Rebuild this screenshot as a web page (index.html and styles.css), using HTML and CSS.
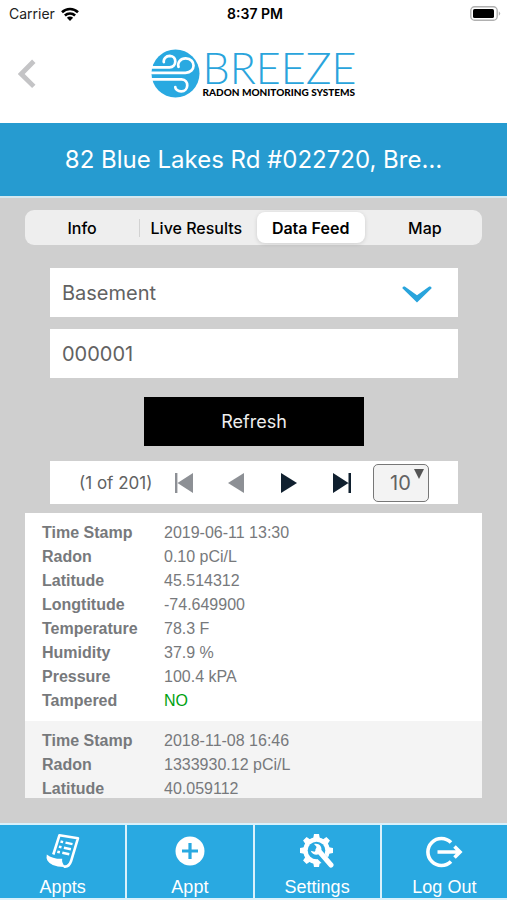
FILE: index.html
```html
<!DOCTYPE html>
<html lang="en">
<head>
<meta charset="utf-8">
<meta name="viewport" content="width=device-width, initial-scale=1">
<title>Breeze Radon Monitoring Systems</title>
<link rel="stylesheet" href="styles.css">
</head>
<body>
<div class="app">
  <div class="status">
    <div class="carrier">Carrier
      <svg width="18" height="14" viewBox="0 0 18 14" aria-hidden="true"><g fill="none" stroke="#000" stroke-width="2.6"><path d="M1 5.2a11.6 11.6 0 0 1 16 0"/><path d="M3.9 8.5a7.4 7.4 0 0 1 10.2 0"/></g><path d="M9 14 5.9 10.8a4.4 4.4 0 0 1 6.2 0z"/></svg>
    </div>
    <div class="clock">8:37 PM</div>
    <div class="battery">
      <svg width="31" height="15" viewBox="0 0 31 15" aria-hidden="true"><rect x=".8" y=".8" width="26.4" height="13.4" rx="3.8" fill="#fff" stroke="#b0b0b0" stroke-width="1.4"/><rect x="3" y="3" width="21" height="9" rx="1.6"/><path d="M28.8 5.2q2.8 2.3 0 4.6z" fill="#b0b0b0"/></svg>
    </div>
  </div>
  <header class="header">
    <button class="back" type="button" aria-label="Back">
      <svg width="18" height="30" viewBox="0 0 18 30" aria-hidden="true"><path d="M15.8 2.2 3.2 15l12.6 12.4" fill="none" stroke="#c4c4c6" stroke-width="4.8"/></svg>
    </button>
    <div class="logo">
      <svg width="49" height="49" viewBox="0 0 49 49" aria-hidden="true"><circle cx="24.5" cy="24.5" r="24" fill="#29a9e1"/><g fill="none" stroke="#fff" stroke-width="2.7" stroke-linecap="round"><path d="M1 18.3h17.500c7.500 0 7.800-11.300.3-11.500-4 0-6.500 3.200-6 6.300"/><path d="M1 23.800h33.500c10.500 0 10.800-14.200.2-14.400-5.400 0-8.600 4.200-7.200 8.400"/><path d="M1 30.300h29.500c8 .4 7.400 12.300-.4 12.100-3.400-.1-5.800-2.400-5.800-4.200"/></g></svg>
      <div class="wordmark"><span class="brand">BREEZE</span><span class="tagline">RADON MONITORING SYSTEMS</span></div>
    </div>
  </header>
  <h1 class="title">82 Blue Lakes Rd #022720, Bre…</h1>
  <main class="content">
    <div class="tabs" role="tablist">
      <button class="tab" type="button" role="tab">Info</button>
      <button class="tab tab-divided" type="button" role="tab">Live Results</button>
      <button class="tab tab-active" type="button" role="tab" aria-selected="true">Data Feed</button>
      <button class="tab" type="button" role="tab">Map</button>
    </div>
    <form class="form">
      <div class="select-wrap">
        <select class="field" aria-label="Location"><option>Basement</option></select>
        <svg class="chevron" width="30" height="17" viewBox="0 0 30 17" aria-hidden="true"><path d="M.4 2.200Q.4 0 2.800.6L15 9.300 27.200.6q2.400-.6 2.400 1.600L15 16.600z" fill="#29a4dc"/></svg>
      </div>
      <input class="field" type="text" value="000001" aria-label="Device number">
      <button class="refresh" type="button">Refresh</button>
      <div class="pager">
        <span class="count">(1 of 201)</span>
        <div class="pages">
          <button class="page" type="button" aria-label="First page"><svg width="20" height="20" viewBox="0 0 20 20" aria-hidden="true"><path d="M1 0h2.400v20H1zM19 0v20L3.500 10z" fill="#8d9095"/></svg></button>
          <button class="page" type="button" aria-label="Previous page"><svg width="20" height="20" viewBox="0 0 20 20" aria-hidden="true"><path d="M18 0v20L2 10z" fill="#8d9095"/></svg></button>
          <button class="page" type="button" aria-label="Next page"><svg width="20" height="20" viewBox="0 0 20 20" aria-hidden="true"><path d="M2 0v20l16-10z" fill="#10202f"/></svg></button>
          <button class="page" type="button" aria-label="Last page"><svg width="20" height="20" viewBox="0 0 20 20" aria-hidden="true"><path d="M1 0v20l15.500-10zM16.500 0H19v20h-2.500z" fill="#10202f"/></svg></button>
        </div>
        <div class="size-wrap">
          <select class="size" aria-label="Rows per page"><option>10</option></select>
          <svg class="size-arrow" width="10" height="10" viewBox="0 0 10 10" aria-hidden="true"><path d="M0 0h10L5 10z" fill="#555"/></svg>
        </div>
      </div>
    </form>
    <div class="feed">
      <table class="record">
        <tr><th scope="row">Time Stamp</th><td>2019-06-11 13:30</td></tr>
        <tr><th scope="row">Radon</th><td>0.10 pCi/L</td></tr>
        <tr><th scope="row">Latitude</th><td>45.514312</td></tr>
        <tr><th scope="row">Longtitude</th><td>-74.649900</td></tr>
        <tr><th scope="row">Temperature</th><td>78.3 F</td></tr>
        <tr><th scope="row">Humidity</th><td>37.9 %</td></tr>
        <tr><th scope="row">Pressure</th><td>100.4 kPA</td></tr>
        <tr><th scope="row">Tampered</th><td class="ok">NO</td></tr>
      </table>
      <table class="record record-alt">
        <tr><th scope="row">Time Stamp</th><td>2018-11-08 16:46</td></tr>
        <tr><th scope="row">Radon</th><td>1333930.12 pCi/L</td></tr>
        <tr><th scope="row">Latitude</th><td>40.059112</td></tr>
      </table>
    </div>
  </main>
  <nav class="nav">
    <a class="nav-item" href="#appts">
      <svg width="34" height="36" viewBox="0 0 34 36" aria-hidden="true"><path d="M7.300 21.500 13.400 2.300 32 5.200 25 28.300q-2.200 6.200-7.200 5.200" fill="none" stroke="#fff" stroke-width="2.600" stroke-linejoin="round"/><path d="M.8 21.400q5.700 4.600 15.400 4.400-.8 4.200 3.200 8.200Q5.400 34.500 1.400 27.600 0 24.600.8 21.400z" fill="#fff"/><g stroke="#fff" stroke-width="2.500"><path d="M14.500 8.500l2.600.6M19.500 9.600l7 1.500M12.900 13.600l2.600.6M17.900 14.700l7 1.500M11.300 18.700l2.600.6M16.300 19.800l7 1.500"/></g></svg>
      <span>Appts</span>
    </a>
    <a class="nav-item" href="#appt">
      <svg width="34" height="36" viewBox="0 0 34 36" aria-hidden="true"><circle cx="17" cy="18" r="14.500" fill="#fff"/><path d="M17 10v16M9 18h16" stroke="#29a9e1" stroke-width="3.200"/></svg>
      <span>Appt</span>
    </a>
    <a class="nav-item" href="#settings">
      <svg width="34" height="36" viewBox="0 0 34 36" aria-hidden="true"><g transform="translate(16.500 17.500)"><g fill="#fff"><circle r="13.300"/><path d="M-3.500-11-2.500-16.500h5l1 5.500zM-3.500 11l1 5.500h5l1-5.500z"/><path d="M-3.500-11-2.500-16.500h5l1 5.500zM-3.500 11l1 5.500h5l1-5.500z" transform="rotate(45)"/><path d="M-3.500-11-2.500-16.500h5l1 5.500zM-3.500 11l1 5.500h5l1-5.500z" transform="rotate(90)"/><path d="M-3.500-11-2.500-16.500h5l1 5.500zM-3.500 11l1 5.500h5l1-5.500z" transform="rotate(135)"/></g><circle r="8.800" fill="#29a9e1"/><path d="M1 2.500 14.500 16" stroke="#29a9e1" stroke-width="8.500"/><path d="M1.500-.5 14.500 14.500" stroke="#fff" stroke-width="5" stroke-linecap="round"/><path d="M-2.500-6.500C2-8 6.500-4 4.500 1 2.500 6-4 5-5.800.2L-2 1.200.2-1-.2-4z" fill="#fff"/></g></svg>
      <span>Settings</span>
    </a>
    <a class="nav-item" href="#logout">
      <svg width="38" height="36" viewBox="0 0 38 36" aria-hidden="true"><g fill="none" stroke="#fff" stroke-width="3.600"><path d="M26 9.500A13.500 13.500 0 1 0 26 28.500"/><path d="M12.500 19H35M29.500 13.500l5.500 5.500-5.500 5.500"/></g></svg>
      <span>Log Out</span>
    </a>
  </nav>
</div>
</body>
</html>
```
FILE: styles.css
```css
* {
  box-sizing: border-box;
}

body {
  margin: 0;
  font-family: Inter, "Liberation Sans", sans-serif;
  color: #000;
}

button,
input,
select {
  margin: 0;
  border: 0;
  border-radius: 0;
  font: inherit;
  color: inherit;
  appearance: none;
}

button {
  padding: 0;
  background: none;
}

svg {
  display: block;
  flex: none;
}

.app {
  display: flex;
  flex-direction: column;
  height: 100vh;
  background: #fff;
}

.status {
  display: grid;
  grid-template-columns: 1fr auto 1fr;
  align-items: center;
  height: 27px;
  padding: 0 6px 0 9px;
  font-size: 14px;
}

.carrier {
  display: flex;
  align-items: center;
  gap: 6px;
  color: #222;
}

.clock {
  font-weight: 600;
}

.battery {
  justify-self: end;
}

.header {
  display: grid;
  grid-template-columns: 1fr auto 1fr;
  align-items: center;
  height: 96px;
  padding: 0 18px 3px;
}

.back {
  justify-self: start;
}

.logo {
  display: flex;
  align-items: center;
  gap: 3px;
}

.wordmark {
  display: flex;
  flex-direction: column;
  font-family: Lato, sans-serif;
}

.brand {
  font-size: 43px;
  font-weight: 300;
  line-height: 36px;
  color: #29a4dc;
}

.tagline {
  font-size: 10px;
  font-weight: 900;
  line-height: 12px;
}

.title {
  margin: 0;
  padding: 0 32px;
  border-bottom: 2px solid #d5e8ef;
  background: #269bd0;
  color: #fff;
  font-size: 24px;
  font-weight: 400;
  line-height: 73px;
  text-align: center;
  white-space: nowrap;
}

.content {
  display: flex;
  flex: 1;
  flex-direction: column;
  min-height: 0;
  padding: 12px 25px 25px;
  background: #cfcfcf;
}

.tabs {
  display: grid;
  grid-template-columns: repeat(4, 1fr);
  flex: none;
  height: 35px;
  border-radius: 9px;
  background: #eee;
}

.tab {
  font-size: 16px;
  font-weight: 500;
  white-space: nowrap;
}

.tab-divided {
  background: linear-gradient(#d2d2d2, #d2d2d2) left center / 1px 18px no-repeat;
}

.tab-active {
  margin: 2px 3px;
  border-radius: 8px;
  background: #fff;
  box-shadow: 0 1px 4px #0002;
  font-weight: 600;
}

.form {
  display: flex;
  flex: none;
  flex-direction: column;
  gap: 12px;
  padding: 23px 24px 9px 25px;
}

.select-wrap,
.size-wrap {
  position: relative;
}

.field {
  display: block;
  width: 100%;
  height: 49px;
  padding: 0 12px;
  background: #fff;
  color: #626262;
  font-size: 20px;
}

.chevron {
  position: absolute;
  top: 18px;
  right: 26px;
  pointer-events: none;
}

.refresh {
  align-self: center;
  width: 54%;
  height: 49px;
  margin: 7px 0 3px;
  background: #000;
  color: #eee;
  font-size: 18px;
}

.pager {
  display: flex;
  align-items: center;
  height: 43px;
  padding: 0 29px;
  background: #fff;
}

.count {
  color: #626262;
  font-size: 17px;
}

.pages {
  display: grid;
  grid-template-columns: repeat(4, 1fr);
  flex: 1;
  padding: 0 5px;
}

.page {
  display: flex;
  justify-content: center;
}

.size {
  display: block;
  width: 56px;
  height: 38px;
  padding: 0 16px;
  border: 1px solid #777;
  border-radius: 5px;
  background: #f3f3f3;
  color: #626262;
  font-size: 20px;
}

.size-arrow {
  position: absolute;
  top: 5px;
  right: 5px;
  pointer-events: none;
}

.feed {
  flex: 1;
  min-height: 0;
  overflow: hidden;
  background: #fff;
}

.record {
  display: block;
  padding: 8px 17px;
  border-spacing: 0;
  color: #77797c;
  font-family: "Liberation Sans", sans-serif;
  font-size: 16px;
  line-height: 24px;
}

.record-alt {
  background: #f4f4f4;
}

.record th {
  width: 122px;
  padding: 0;
  text-align: left;
}

.record td {
  padding: 0;
}

.record .ok {
  color: #00a110;
}

.nav {
  display: grid;
  grid-template-columns: repeat(4, 1fr);
  flex: none;
  gap: 2px;
  padding: 2px 0;
  background: #d9f1fb;
}

.nav-item {
  display: flex;
  flex-direction: column;
  align-items: center;
  gap: 8px;
  height: 73px;
  padding-top: 8px;
  background: #29a9e1;
  color: #fff;
  font-family: "Liberation Sans", sans-serif;
  font-size: 18px;
  line-height: 21px;
  text-decoration: none;
}
```
